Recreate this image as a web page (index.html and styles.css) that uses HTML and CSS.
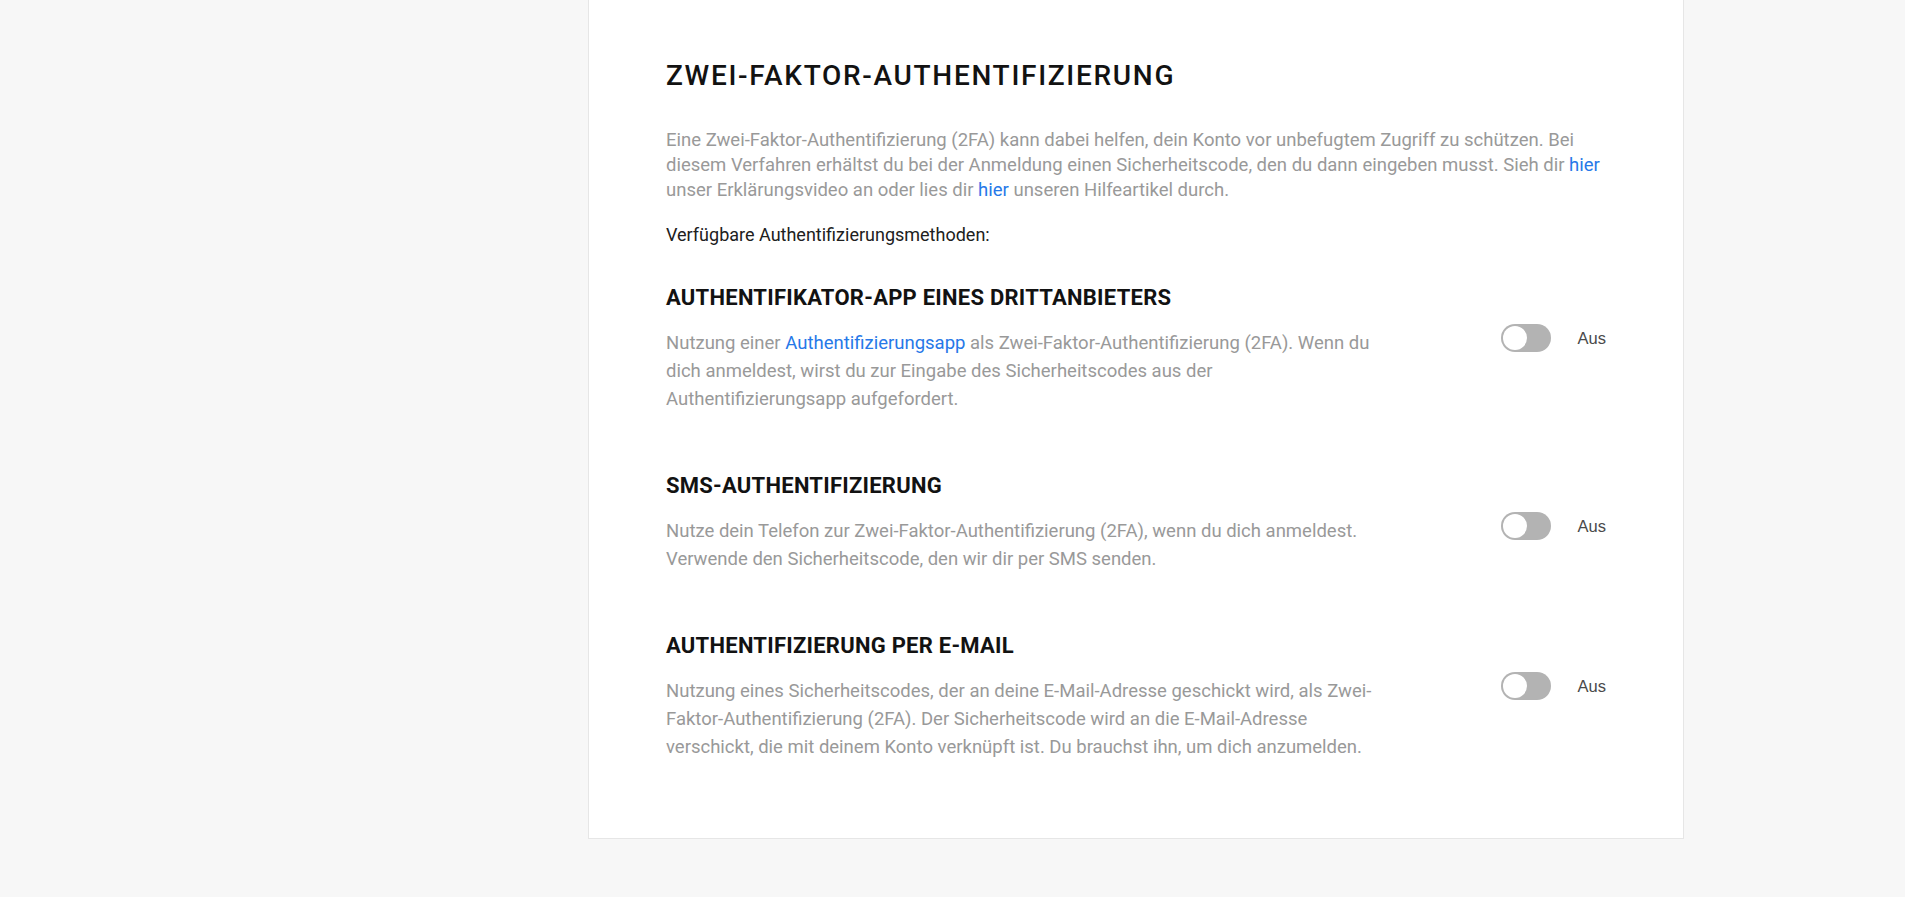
FILE: index.html
```html
<!DOCTYPE html>
<html lang="de">
<head>
    <meta charset="UTF-8">
    <meta name="viewport" content="width=device-width, initial-scale=1.0">
    <title>Zwei-Faktor-Authentifizierung</title>
    <link rel="stylesheet" href="styles.css">
</head>
<body>
<div class="layout">
    <aside class="sidebar"></aside>
    <main class="card">
        <h1>Zwei-Faktor-Authentifizierung</h1>
        <p class="intro">Eine Zwei-Faktor-Authentifizierung (2FA) kann dabei helfen, dein Konto vor unbefugtem Zugriff zu schützen. Bei diesem Verfahren erhältst du bei der Anmeldung einen Sicherheitscode, den du dann eingeben musst. Sieh dir <a href="#">hier</a> unser Erklärungsvideo an oder lies dir <a href="#">hier</a> unseren Hilfeartikel durch.</p>
        <p class="methods">Verfügbare Authentifizierungsmethoden:</p>

        <section class="method">
            <h2>Authentifikator-App eines Drittanbieters</h2>
            <div class="method-row">
                <p class="desc">Nutzung einer <a href="#">Authentifizierungsapp</a> als Zwei-Faktor-Authentifizierung (2FA). Wenn du dich anmeldest, wirst du zur Eingabe des Sicherheitscodes aus der Authentifizierungsapp aufgefordert.</p>
                <label class="switch">
                    <span class="track"><span class="knob"></span></span>
                    <span class="state">Aus</span>
                </label>
            </div>
        </section>

        <section class="method">
            <h2>SMS-Authentifizierung</h2>
            <div class="method-row">
                <p class="desc">Nutze dein Telefon zur Zwei-Faktor-Authentifizierung (2FA), wenn du dich anmeldest. Verwende den Sicherheitscode, den wir dir per SMS senden.</p>
                <label class="switch">
                    <span class="track"><span class="knob"></span></span>
                    <span class="state">Aus</span>
                </label>
            </div>
        </section>

        <section class="method">
            <h2>Authentifizierung per E-Mail</h2>
            <div class="method-row">
                <p class="desc">Nutzung eines Sicherheitscodes, der an deine E-Mail-Adresse geschickt wird, als Zwei-Faktor-Authentifizierung (2FA). Der Sicherheitscode wird an die E-Mail-Adresse verschickt, die mit deinem Konto verknüpft ist. Du brauchst ihn, um dich anzumelden.</p>
                <label class="switch">
                    <span class="track"><span class="knob"></span></span>
                    <span class="state">Aus</span>
                </label>
            </div>
        </section>
    </main>
</div>
</body>
</html>
```

FILE: styles.css
```css
body {
    margin: 0;
    background-color: #f7f7f7;
    font-family: Roboto, 'Noto Sans', sans-serif;
    color: #202020;
}
a {
    color: #2678e8;
    text-decoration: none;
}
.layout {
    display: grid;
    grid-template-columns: 367px 1096px;
    justify-content: center;
}
.card {
    background-color: #fff;
    border: 1px solid #e6e6e6;
    border-top: none;
    padding: 59px 77px 77px;
}
h1 {
    margin: 0 0 35px;
    font-size: 28px;
    line-height: 34px;
    font-weight: 500;
    letter-spacing: 1.7px;
    text-transform: uppercase;
    color: #121212;
}
.intro {
    margin: 0 0 20px;
    font-size: 18.5px;
    line-height: 25px;
    color: #999;
}
.methods {
    margin: 0;
    font-size: 18px;
    line-height: 24px;
    color: #202020;
}
.method {
    margin-top: 38px;
}
.method + .method {
    margin-top: 60px;
}
h2 {
    margin: 0 0 18px;
    font-size: 22px;
    line-height: 26px;
    font-weight: 700;
    letter-spacing: 0.25px;
    text-transform: uppercase;
    color: #121212;
}
.method-row {
    display: flex;
    justify-content: space-between;
    align-items: flex-start;
}
.desc {
    margin: 0;
    max-width: 725px;
    font-size: 18.5px;
    line-height: 28px;
    color: #999;
}
.switch {
    display: flex;
    align-items: center;
    gap: 27px;
    margin-top: -5px;
    cursor: pointer;
}
.track {
    display: block;
    width: 50px;
    height: 28px;
    border-radius: 14px;
    background-color: #b3b3b3;
    padding: 2px;
    box-sizing: border-box;
}
.knob {
    display: block;
    width: 24px;
    height: 24px;
    border-radius: 50%;
    background-color: #fff;
}
.state {
    font-family: 'Liberation Sans', Arial, sans-serif;
    font-size: 16.5px;
    color: #4a4a4a;
}
```
